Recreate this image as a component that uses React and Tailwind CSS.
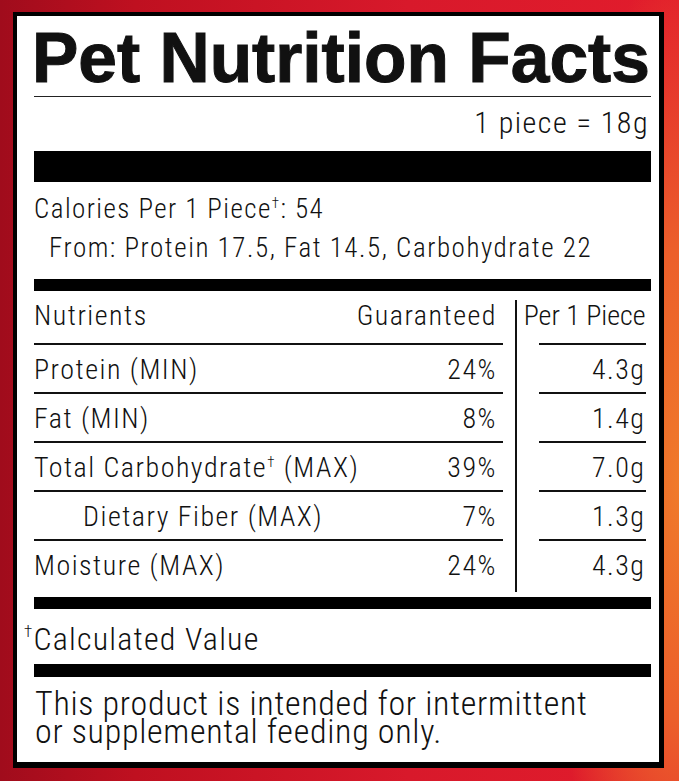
const rows = [
  { name: "Protein (MIN)", pct: "24%", per: "4.3g" },
  { name: "Fat (MIN)", pct: "8%", per: "1.4g" },
  { name: "Total Carbohydrate", dagger: true, pct: "39%", per: "7.0g" },
  { name: "Dietary Fiber (MAX)", indent: true, pct: "7%", per: "1.3g" },
];

const Dagger = () => <sup className="text-[15px] -top-[0.7em]">†</sup>;

export default function App() {
  return (
    <div className="w-[679px] h-[781px] pt-[12px] pl-[13px] pr-[15px] pb-[13px] bg-[radial-gradient(130px_520px_at_100%_62%,#f07a2a_0%,#ec5f2b_45%,transparent_100%),linear-gradient(90deg,#a00c1c_0%,#bf1020_20%,#d8192b_60%,#e21c2c_100%)]">
      <div className="h-full bg-black pt-[4px] pl-[4px] pr-[5px] pb-[6px]">
        <div className="h-full bg-white pl-[17px] pr-[8px] text-[#111] font-['Roboto_Condensed',Roboto,sans-serif] font-light tracking-[1.5px]">
          {/* title */}
          <h1 className="pt-[8px] -ml-[2px] text-[69.5px] leading-[69px] font-bold tracking-normal font-['Liberation_Sans',Arial,sans-serif] whitespace-nowrap [-webkit-text-stroke:1px_#111]">
            Pet Nutrition Facts
          </h1>
          <div className="mt-[3px] h-px bg-[#222]" />
          <div className="mt-[8px] text-right text-[30px] leading-[36px] pr-[2px]">1 piece = 18g</div>
          <div className="mt-[10px] h-[31px] bg-black" />

          {/* calories */}
          <div className="mt-[10px] text-[27px] leading-[34px] tracking-[1.45px]">
            Calories Per 1 Piece<Dagger />: 54
          </div>
          <div className="mt-[5px] pl-[15px] text-[27px] leading-[34px] tracking-[1.55px]">
            From: Protein 17.5, Fat 14.5, Carbohydrate 22
          </div>
          <div className="mt-[14px] h-[12px] bg-black" />

          {/* table */}
          <div className="flex text-[28px]">
            <div className="w-[469px]">
              <div className="flex justify-between border-b-2 border-[#111] pt-[2px] pb-[5px] leading-[45px] pr-[6px]">
                <span>Nutrients</span>
                <span>Guaranteed</span>
              </div>
              {rows.map((r) => (
                <div key={r.name} className="flex justify-between border-b-2 border-[#111] pt-[2px] leading-[45px] pr-[6px]">
                  <span className={r.indent ? "pl-[49px]" : ""}>
                    {r.name}
                    {r.dagger && (
                      <>
                        <Dagger /> (MAX)
                      </>
                    )}
                  </span>
                  <span>{r.pct}</span>
                </div>
              ))}
              <div className="flex justify-between pt-[2px] pb-[9px] leading-[45px] pr-[6px]">
                <span>Moisture (MAX)</span>
                <span>24%</span>
              </div>
            </div>
            <div className="w-[12px]" />
            <div className="w-[1.5px] bg-[#111] mt-[9px] mb-[5px]" />
            <div className="w-[129px]">
              <div className="border-b-2 border-[#111] ml-[22px] pt-[2px] pb-[5px] leading-[45px] text-right whitespace-nowrap tracking-normal">
                <span className="-ml-[20px]">Per 1 Piece</span>
              </div>
              {rows.map((r) => (
                <div key={r.name} className="ml-[22px] border-b-2 border-[#111] pt-[2px] leading-[45px] text-right">
                  {r.per}
                </div>
              ))}
              <div className="ml-[22px] pt-[2px] leading-[45px] text-right">4.3g</div>
            </div>
          </div>

          <div className="h-[12px] bg-black" />
          <div className="mt-[10px] text-[32px] leading-[40px] whitespace-nowrap tracking-[1.2px]">
            <span className="-ml-[10px] text-[17px] align-top leading-[24px]">†</span>Calculated Value
          </div>
          <div className="mt-[5px] h-[13px] bg-black" />
          <p className="mt-[12px] pl-[1px] text-[34px] leading-[28px] tracking-[0.7px]">
            This product is intended for intermittent
            <br />
            or supplemental feeding only.
          </p>
        </div>
      </div>
    </div>
  );
}
